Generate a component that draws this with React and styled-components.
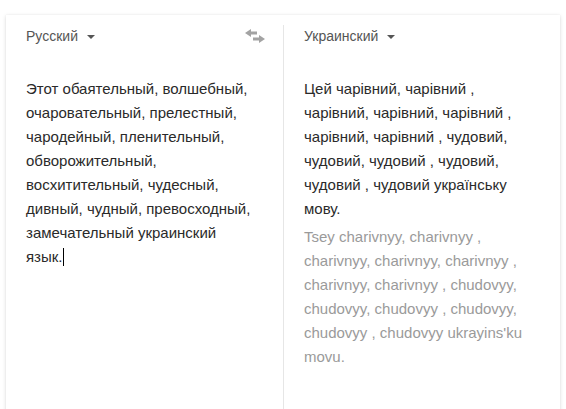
import React from "react";
import styled, { createGlobalStyle } from "styled-components";

const GlobalStyles = createGlobalStyle`
  html, body {
    margin: 0;
    padding: 0;
    background: #fff;
    font-family: "Liberation Sans", Arial, sans-serif;
  }
`;

const Page = styled.div`
  padding: 15px 6px 0 6px;
  height: 409px;
  box-sizing: border-box;
  overflow: hidden;
`;

const Card = styled.div`
  display: grid;
  grid-template-columns: 1fr 1fr;
  width: 554px;
  height: 420px;
  background: #fff;
  box-shadow: 0 1px 4px rgba(0, 0, 0, 0.14), 0 0 1px rgba(0, 0, 0, 0.08);
`;

const Column = styled.div`
  display: flex;
  flex-direction: column;
  padding: 0 ${(p) => (p.$divided ? "20px" : "30px")} 0 20px;
  border-left: ${(p) => (p.$divided ? "1px solid #e6e6e6" : "none")};
  margin-top: ${(p) => (p.$divided ? "10px" : "0")};
`;

const Header = styled.div`
  display: flex;
  align-items: center;
  justify-content: space-between;
  height: ${(p) => (p.$divided ? "22px" : "42px")};
  margin-right: ${(p) => (p.$divided ? "0" : "-10px")};
`;

const LangButton = styled.div`
  display: flex;
  align-items: center;
  gap: 9px;
  font-size: 14px;
  color: #555;
  cursor: pointer;
`;

const Caret = styled.span`
  width: 0;
  height: 0;
  border-left: 4px solid transparent;
  border-right: 4px solid transparent;
  border-top: 4px solid #555;
  margin-top: 1px;
`;

const SwapButton = styled.div`
  display: flex;
  margin-right: -2px;
`;

const Body = styled.div`
  margin-top: ${(p) => (p.$divided ? "30px" : "20px")};
  font-size: 15px;
  line-height: 24px;
  color: #2a2a2a;
`;

const Translit = styled.div`
  margin-top: 4px;
  font-size: 15px;
  line-height: 24px;
  color: #9a9a9a;
`;

const Cursor = styled.span`
  display: inline-block;
  width: 1px;
  height: 18px;
  background: #000;
  vertical-align: -4px;
`;

const SwapIcon = () => (
  <svg width="20" height="14" viewBox="0 0 20 14">
    <path d="M0 4 L6 0 V2.5 H12 V5.5 H6 V8 Z" fill="#a3a3a3" />
    <path d="M20 10 L14 6 V8.5 H8 V11.5 H14 V14 Z" fill="#a3a3a3" />
  </svg>
);

export default function App() {
  return (
    <Page>
      <GlobalStyles />
      <Card>
        <Column>
          <Header>
            <LangButton>
              Русский <Caret />
            </LangButton>
            <SwapButton>
              <SwapIcon />
            </SwapButton>
          </Header>
          <Body>
            Этот обаятельный, волшебный, очаровательный, прелестный, чародейный,
            пленительный, обворожительный, восхитительный, чудесный, дивный,
            чудный, превосходный, замечательный украинский язык.
            <Cursor />
          </Body>
        </Column>
        <Column $divided>
          <Header $divided>
            <LangButton>
              Украинский <Caret />
            </LangButton>
          </Header>
          <Body $divided>
            Цей чарівний, чарівний , чарівний, чарівний, чарівний , чарівний,
            чарівний , чудовий, чудовий, чудовий , чудовий, чудовий , чудовий
            українську мову.
          </Body>
          <Translit>
            Tsey charivnyy, charivnyy , charivnyy, charivnyy, charivnyy ,
            charivnyy, charivnyy , chudovyy, chudovyy, chudovyy , chudovyy,
            chudovyy , chudovyy ukrayins'ku movu.
          </Translit>
        </Column>
      </Card>
    </Page>
  );
}
